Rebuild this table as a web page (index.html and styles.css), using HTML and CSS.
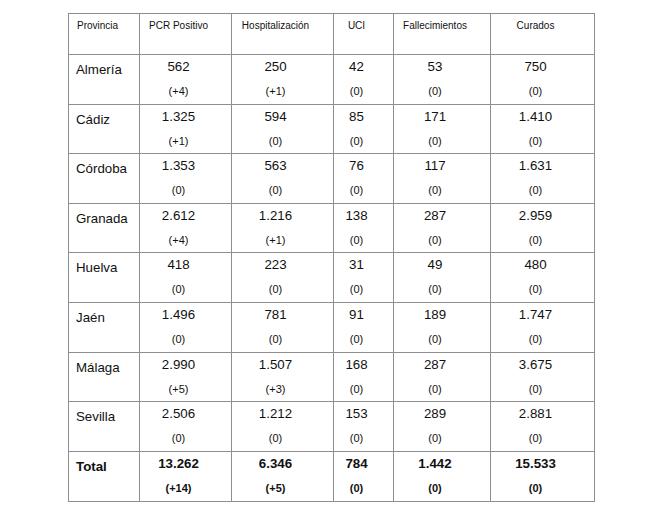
FILE: index.html
```html
<!DOCTYPE html>
<html lang="es">
<head>
<meta charset="utf-8">
<title>Datos por provincia</title>
<link rel="stylesheet" href="styles.css">
</head>
<body>
<table class="datos">
  <colgroup>
    <col class="c1"><col class="c2"><col class="c3"><col class="c4"><col class="c5"><col class="c6">
  </colgroup>
  <thead>
    <tr class="head">
      <th class="prov">Provincia</th>
      <th class="num">PCR Positivo</th>
      <th class="num">Hospitalización</th>
      <th class="num">UCI</th>
      <th class="num">Fallecimientos</th>
      <th class="num">Curados</th>
    </tr>
  </thead>
  <tbody>
    <tr class="row">
      <td class="prov">Almería</td>
      <td class="num"><div class="v">562</div><div class="d">(+4)</div></td>
      <td class="num"><div class="v">250</div><div class="d">(+1)</div></td>
      <td class="num"><div class="v">42</div><div class="d">(0)</div></td>
      <td class="num"><div class="v">53</div><div class="d">(0)</div></td>
      <td class="num"><div class="v">750</div><div class="d">(0)</div></td>
    </tr>
    <tr class="row">
      <td class="prov">Cádiz</td>
      <td class="num"><div class="v">1.325</div><div class="d">(+1)</div></td>
      <td class="num"><div class="v">594</div><div class="d">(0)</div></td>
      <td class="num"><div class="v">85</div><div class="d">(0)</div></td>
      <td class="num"><div class="v">171</div><div class="d">(0)</div></td>
      <td class="num"><div class="v">1.410</div><div class="d">(0)</div></td>
    </tr>
    <tr class="row">
      <td class="prov">Córdoba</td>
      <td class="num"><div class="v">1.353</div><div class="d">(0)</div></td>
      <td class="num"><div class="v">563</div><div class="d">(0)</div></td>
      <td class="num"><div class="v">76</div><div class="d">(0)</div></td>
      <td class="num"><div class="v">117</div><div class="d">(0)</div></td>
      <td class="num"><div class="v">1.631</div><div class="d">(0)</div></td>
    </tr>
    <tr class="row">
      <td class="prov">Granada</td>
      <td class="num"><div class="v">2.612</div><div class="d">(+4)</div></td>
      <td class="num"><div class="v">1.216</div><div class="d">(+1)</div></td>
      <td class="num"><div class="v">138</div><div class="d">(0)</div></td>
      <td class="num"><div class="v">287</div><div class="d">(0)</div></td>
      <td class="num"><div class="v">2.959</div><div class="d">(0)</div></td>
    </tr>
    <tr class="row">
      <td class="prov">Huelva</td>
      <td class="num"><div class="v">418</div><div class="d">(0)</div></td>
      <td class="num"><div class="v">223</div><div class="d">(0)</div></td>
      <td class="num"><div class="v">31</div><div class="d">(0)</div></td>
      <td class="num"><div class="v">49</div><div class="d">(0)</div></td>
      <td class="num"><div class="v">480</div><div class="d">(0)</div></td>
    </tr>
    <tr class="row">
      <td class="prov">Jaén</td>
      <td class="num"><div class="v">1.496</div><div class="d">(0)</div></td>
      <td class="num"><div class="v">781</div><div class="d">(0)</div></td>
      <td class="num"><div class="v">91</div><div class="d">(0)</div></td>
      <td class="num"><div class="v">189</div><div class="d">(0)</div></td>
      <td class="num"><div class="v">1.747</div><div class="d">(0)</div></td>
    </tr>
    <tr class="row">
      <td class="prov">Málaga</td>
      <td class="num"><div class="v">2.990</div><div class="d">(+5)</div></td>
      <td class="num"><div class="v">1.507</div><div class="d">(+3)</div></td>
      <td class="num"><div class="v">168</div><div class="d">(0)</div></td>
      <td class="num"><div class="v">287</div><div class="d">(0)</div></td>
      <td class="num"><div class="v">3.675</div><div class="d">(0)</div></td>
    </tr>
    <tr class="row">
      <td class="prov">Sevilla</td>
      <td class="num"><div class="v">2.506</div><div class="d">(0)</div></td>
      <td class="num"><div class="v">1.212</div><div class="d">(0)</div></td>
      <td class="num"><div class="v">153</div><div class="d">(0)</div></td>
      <td class="num"><div class="v">289</div><div class="d">(0)</div></td>
      <td class="num"><div class="v">2.881</div><div class="d">(0)</div></td>
    </tr>
    <tr class="row total">
      <td class="prov">Total</td>
      <td class="num"><div class="v">13.262</div><div class="d">(+14)</div></td>
      <td class="num"><div class="v">6.346</div><div class="d">(+5)</div></td>
      <td class="num"><div class="v">784</div><div class="d">(0)</div></td>
      <td class="num"><div class="v">1.442</div><div class="d">(0)</div></td>
      <td class="num"><div class="v">15.533</div><div class="d">(0)</div></td>
    </tr>
  </tbody>
</table>
</body>
</html>
```
FILE: styles.css
```css
html, body {
  margin: 0;
  padding: 0;
  background: #ffffff;
}

body {
  padding: 13px 0 0 68px;
  font-family: "Liberation Sans", Arial, sans-serif;
  color: #111111;
}

.datos {
  border-collapse: collapse;
  table-layout: fixed;
  width: 527px;
}

.c1 { width: 71px; }
.c2 { width: 92px; }
.c3 { width: 102px; }
.c4 { width: 60px; }
.c5 { width: 97px; }
.c6 { width: 104px; }

.datos th,
.datos td {
  border: 1px solid #8e8e8e;
  vertical-align: top;
  box-sizing: border-box;
}

.head th {
  height: 41px;
  font-size: 10px;
  line-height: 12px;
  font-weight: normal;
  padding-top: 6px;
}

.head th.prov {
  text-align: left;
  padding-left: 8px;
}

.num {
  text-align: center;
  padding-left: 4px;
  padding-right: 18px;
}

.row td {
  height: 49.6px;
  padding-top: 4px;
}

.row td.prov {
  text-align: left;
  padding-left: 7px;
  padding-top: 7px;
  font-size: 13.3px;
  line-height: 16px;
}

.v {
  font-size: 13.3px;
  line-height: 16px;
}

.d {
  font-size: 11px;
  line-height: 14px;
  margin-top: 9px;
}

.total td {
  height: 50px;
  font-weight: bold;
}
```
